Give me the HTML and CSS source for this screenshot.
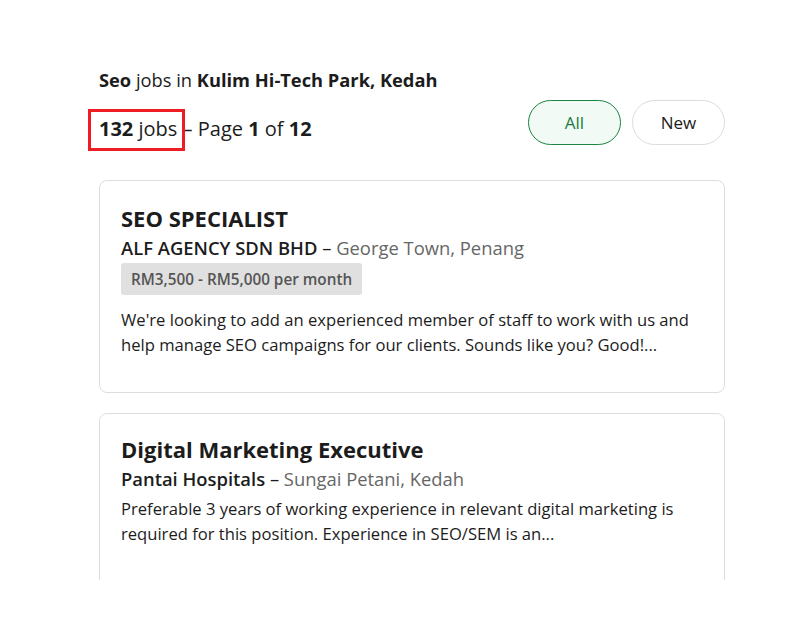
FILE: index.html
```html
<!DOCTYPE html>
<html>
<head>
<meta charset="utf-8">
<link rel="stylesheet" href="styles.css">
</head>
<body>
<main class="page">
  <h1 class="heading"><b>Seo</b> jobs in <b>Kulim Hi-Tech Park, Kedah</b></h1>
  <div class="toolbar">
    <div class="count"><span class="highlight"><b>132</b> jobs</span> – Page <b>1</b> of <b>12</b></div>
    <div class="filters">
      <button class="pill active">All</button>
      <button class="pill">New</button>
    </div>
  </div>
  <div class="list">
    <article class="card">
      <h2 class="title">SEO SPECIALIST</h2>
      <div class="meta"><span class="company">ALF AGENCY SDN BHD</span> – <span class="loc">George Town, Penang</span></div>
      <div class="salary">RM3,500 - RM5,000 per month</div>
      <p class="desc">We're looking to add an experienced member of staff to work with us and help manage SEO campaigns for our clients. Sounds like you? Good!...</p>
    </article>
    <article class="card">
      <h2 class="title">Digital Marketing Executive</h2>
      <div class="meta"><span class="company">Pantai Hospitals</span> – <span class="loc">Sungai Petani, Kedah</span></div>
      <p class="desc">Preferable 3 years of working experience in relevant digital marketing is required for this position. Experience in SEO/SEM is an...</p>
    </article>
  </div>
</main>
</body>
</html>
```
FILE: styles.css
```css
* { box-sizing: border-box; }
html, body { margin: 0; padding: 0; background: #fff; }
body {
  font-family: "Open Sans", "Noto Sans", sans-serif;
  color: #1c1c1c;
}
.page {
  width: 626px;
  margin-left: 99px;
  padding-top: 67px;
}
.heading {
  margin: 0;
  font-size: 18.3px;
  font-weight: 400;
  line-height: 26px;
}
.toolbar {
  display: flex;
  justify-content: space-between;
  align-items: center;
  margin-top: 7px;
}
.count {
  font-size: 20px;
  line-height: 28px;
  margin-top: 12px;
}
.highlight {
  position: relative;
}
.highlight::after {
  content: "";
  position: absolute;
  left: -11px;
  right: -8px;
  top: -6px;
  bottom: -9px;
  border: 3px solid #ee1c25;
}
.filters {
  display: flex;
  gap: 11px;
}
.pill {
  font-family: inherit;
  font-size: 17px;
  height: 45px;
  width: 93px;
  border-radius: 23px;
  border: 1px solid #dcdcdc;
  background: #fff;
  color: #1c1c1c;
  padding: 0;
}
.pill.active {
  border-color: #1c8442;
  background: #f1faf4;
  color: #1c7a3e;
  font-weight: 500;
}
.list {
  margin-top: 35px;
  height: 400px;
  overflow: hidden;
  display: flex;
  flex-direction: column;
  gap: 20px;
}
.card {
  flex: none;
  border: 1px solid #dedede;
  border-radius: 8px;
  padding: 21px 21px 35px;
}
.card:last-child { min-height: 200px; padding-top: 19px; }
.title {
  margin: 0;
  font-size: 22px;
  font-weight: 700;
  line-height: 32px;
}
.meta {
  font-size: 18.4px;
  line-height: 28px;
}
.company { font-weight: 600; }
.loc { color: #666; }
.salary {
  display: inline-block;
  margin-top: 1px;
  background: #e0e0e0;
  border-radius: 3px;
  padding: 5px 10px;
  font-size: 15.3px;
  font-weight: 600;
  color: #555;
  line-height: 22px;
}
.desc {
  margin: 12px 0 0;
  font-size: 16.6px;
  line-height: 25px;
}
.card:last-child .desc { margin-top: 3px; }
```
